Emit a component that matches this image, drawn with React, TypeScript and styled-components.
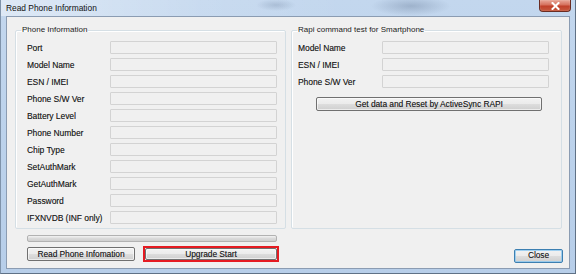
import React from "react";
import styled, { createGlobalStyle } from "styled-components";

const GlobalStyle = createGlobalStyle`
  html, body { margin: 0; padding: 0; background: #ffffff; }
  * { box-sizing: border-box; }
  body { font-family: "Liberation Sans", Arial, sans-serif; }
`;

const Window = styled.div`
  width: 576px;
  height: 274px;
  display: flex;
  flex-direction: column;
  background: linear-gradient(180deg, #c3d7ee 0%, #bdd3ec 40%, #b7cee9 100%);
  border-left: 1px solid #7f93aa;
  border-right: 1px solid #5f7186;
  border-bottom: 1px solid #5f7186;
  overflow: hidden;
`;

const TitleBar = styled.div`
  height: 16px;
  flex: none;
  display: flex;
  align-items: flex-start;
  justify-content: space-between;
  padding-left: 5px;
  background:
    radial-gradient(ellipse 40px 10px at 410px 6px, rgba(90, 110, 140, 0.35), rgba(90, 110, 140, 0) 100%),
    radial-gradient(ellipse 20px 6px at 275px 5px, rgba(90, 110, 140, 0.25), rgba(90, 110, 140, 0) 100%),
    linear-gradient(90deg, rgba(255, 255, 255, 0.45) 0%, rgba(255, 255, 255, 0.1) 35%, rgba(255, 255, 255, 0) 60%);
`;

const Title = styled.span`
  font-size: 8.4px;
  line-height: 14px;
  color: #111;
  margin-top: 1px;
`;

const CloseX = styled.div`
  width: 32px;
  height: 12px;
  margin-right: 4px;
  display: flex;
  align-items: center;
  justify-content: center;
  background: linear-gradient(180deg, #e9a899 0%, #d5705c 45%, #c0402a 55%, #c65a3f 100%);
  border: 1px solid #6a2c22;
  border-top: none;
  border-radius: 0 0 4px 4px;
  box-shadow: inset 0 0 1px rgba(255, 255, 255, 0.7);
`;

const Client = styled.div`
  flex: 1;
  margin: 0 5px 4px 5px;
  background: #f0f0f0;
  border: 1px solid #8b9cb2;
  padding: 8px 5px 6px 8px;
  display: flex;
  flex-direction: column;
`;

const GroupsRow = styled.div`
  display: flex;
  gap: 5px;
`;

const Group = styled.fieldset<{ $pad: number }>`
  width: 271px;
  margin: 0;
  padding: 0 7px 4px ${(p) => p.$pad}px;
  border: 1px solid #d5dfe5;
  border-radius: 2px;
  box-shadow: inset 1px 1px 0 #ffffff;
  min-width: 0;
`;

const Legend = styled.legend<{ $pad: number }>`
  font-size: 8px;
  line-height: 10px;
  color: #1a1a1a;
  padding: 0 1px;
  margin-left: ${(p) => 5 - p.$pad}px;
`;

const FieldGrid = styled.div<{ $labelW: number }>`
  display: grid;
  grid-template-columns: ${(p) => p.$labelW}px 167px;
  grid-auto-rows: 13px;
  row-gap: 4px;
  padding-top: 6px;
  align-items: center;
`;

const Label = styled.span`
  font-size: 8.4px;
  color: #1c1c1c;
  white-space: nowrap;
  text-shadow: 0.25px 0 0 rgba(0, 0, 0, 0.45);
`;

const Field = styled.div`
  height: 13px;
  background: #f0f0f0;
  border: 1px solid #d3d3d3;
  border-radius: 1px;
`;

const Button = styled.button<{ $w: number; $h?: number; $default?: boolean }>`
  width: ${(p) => p.$w}px;
  height: ${(p) => p.$h ?? 14}px;
  padding: 0;
  font-family: "Liberation Sans", Arial, sans-serif;
  font-size: 8.3px;
  line-height: 1;
  color: #1a1a1a;
  text-shadow: 0.25px 0 0 rgba(0, 0, 0, 0.4);
  border: 1px solid ${(p) => (p.$default ? "#3c7fb1" : "#707070")};
  border-radius: 2px;
  background: linear-gradient(180deg, #f2f2f2 0%, #ebebeb 50%, #dddddd 51%, #cfcfcf 100%);
  box-shadow: inset 0 0 0 1px ${(p) => (p.$default ? "rgba(140, 200, 240, 0.8)" : "rgba(255, 255, 255, 0.6)")};
`;

const RapiButton = styled(Button)`
  margin: 9px 0 0 18px;
`;

const Progress = styled.div`
  margin: 6px 0 0 12px;
  width: 250px;
  height: 7px;
  border: 1px solid #b2b2b2;
  border-radius: 2px;
  background: linear-gradient(180deg, #f3f3f3 0%, #dadada 50%, #cfcfcf 100%);
`;

const ButtonRow = styled.div`
  display: flex;
  align-items: center;
  margin: 4px 0 0 12px;
  gap: 8px;
  height: 16px;
`;

const Highlight = styled.div`
  width: 136px;
  height: 16px;
  border: 2px solid #e51b22;
  display: flex;
`;

const CloseSpacer = styled.div`
  margin-left: auto;
  margin-right: 1px;
  margin-top: -1px;
`;

const leftFields = [
  "Port",
  "Model Name",
  "ESN / IMEI",
  "Phone S/W Ver",
  "Battery Level",
  "Phone Number",
  "Chip Type",
  "SetAuthMark",
  "GetAuthMark",
  "Password",
  "IFXNVDB (INF only)",
];

const rightFields = ["Model Name", "ESN / IMEI", "Phone S/W Ver"];

export default function App() {
  return (
    <>
      <GlobalStyle />
      <Window>
        <TitleBar>
          <Title>Read Phone Information</Title>
          <CloseX>
            <svg width="9" height="8" viewBox="0 0 9 8">
              <path d="M1.5 1 L7.5 7 M7.5 1 L1.5 7" stroke="#ffffff" strokeWidth="2" strokeLinecap="square" />
            </svg>
          </CloseX>
        </TitleBar>
        <Client>
          <GroupsRow>
            <Group $pad={11}>
              <Legend $pad={11}>Phone Information</Legend>
              <FieldGrid $labelW={83}>
                {leftFields.map((f) => (
                  <React.Fragment key={f}>
                    <Label>{f}</Label>
                    <Field />
                  </React.Fragment>
                ))}
              </FieldGrid>
            </Group>
            <Group $pad={6}>
              <Legend $pad={6}>Rapi command test for Smartphone</Legend>
              <FieldGrid $labelW={84}>
                {rightFields.map((f) => (
                  <React.Fragment key={f}>
                    <Label>{f}</Label>
                    <Field />
                  </React.Fragment>
                ))}
              </FieldGrid>
              <RapiButton $w={226}>Get data and Reset by ActiveSync RAPI</RapiButton>
            </Group>
          </GroupsRow>
          <Progress />
          <ButtonRow>
            <Button $w={108}>Read Phone Infomation</Button>
            <Highlight>
              <Button $w={132} $h={12}>Upgrade Start</Button>
            </Highlight>
            <CloseSpacer>
              <Button $w={49} $default>Close</Button>
            </CloseSpacer>
          </ButtonRow>
        </Client>
      </Window>
    </>
  );
}
